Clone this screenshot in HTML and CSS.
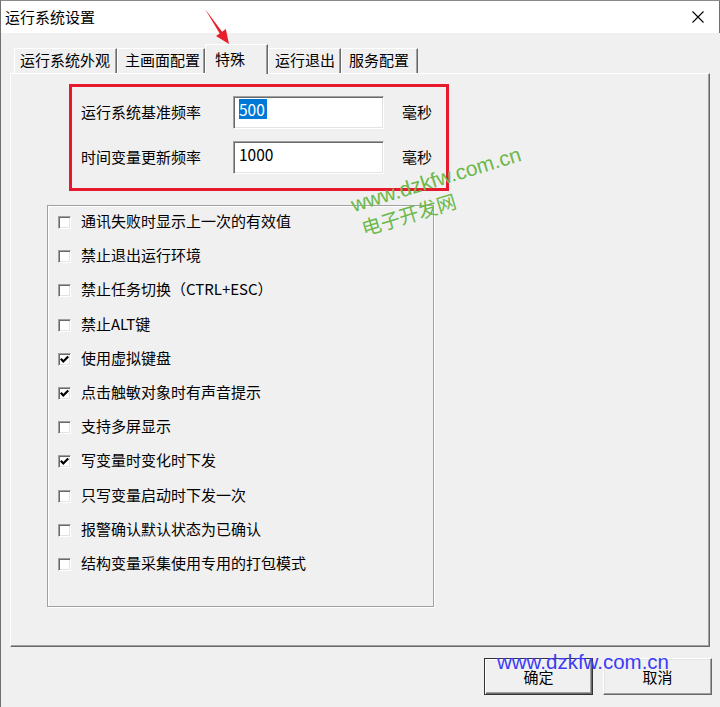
FILE: index.html
```html
<!DOCTYPE html>
<html lang="zh-CN">
<head>
<meta charset="utf-8">
<title>运行系统设置</title>
<link rel="stylesheet" href="styles.css">
</head>
<body>
<div class="window">
  <div class="titlebar">
    <span class="title">运行系统设置</span>
    <svg class="close" width="12" height="12" viewBox="0 0 12 12"><path d="M0.5 0.5 L11.5 11.5 M11.5 0.5 L0.5 11.5" stroke="#000" stroke-width="1.1" fill="none"/></svg>
  </div>
  <div class="client">
    <div class="tabs">
      <div class="tab t1">运行系统外观</div>
      <div class="tab t2">主画面配置</div>
      <div class="tab active">特殊</div>
      <div class="tab t4">运行退出</div>
      <div class="tab t5">服务配置</div>
    </div>
    <div class="panel">
      <div class="freqbox">
        <div class="frow">
          <span class="flabel">运行系统基准频率</span>
          <div class="field"><span class="sel">500</span></div>
          <span class="unit">毫秒</span>
        </div>
        <div class="frow">
          <span class="flabel">时间变量更新频率</span>
          <div class="field"><span>1000</span></div>
          <span class="unit">毫秒</span>
        </div>
      </div>
      <div class="group">
        <div class="opt"><span class="cb"></span><span>通讯失败时显示上一次的有效值</span></div>
        <div class="opt"><span class="cb"></span><span>禁止退出运行环境</span></div>
        <div class="opt"><span class="cb"></span><span>禁止任务切换（CTRL+ESC）</span></div>
        <div class="opt"><span class="cb"></span><span>禁止ALT键</span></div>
        <div class="opt"><span class="cb"><svg width="11" height="11" viewBox="0 0 11 11"><path d="M1.8 4.8 L4.3 7.5 L9.2 2.4" stroke="#000" stroke-width="2.2" fill="none"/></svg></span><span>使用虚拟键盘</span></div>
        <div class="opt"><span class="cb"><svg width="11" height="11" viewBox="0 0 11 11"><path d="M1.8 4.8 L4.3 7.5 L9.2 2.4" stroke="#000" stroke-width="2.2" fill="none"/></svg></span><span>点击触敏对象时有声音提示</span></div>
        <div class="opt"><span class="cb"></span><span>支持多屏显示</span></div>
        <div class="opt"><span class="cb"><svg width="11" height="11" viewBox="0 0 11 11"><path d="M1.8 4.8 L4.3 7.5 L9.2 2.4" stroke="#000" stroke-width="2.2" fill="none"/></svg></span><span>写变量时变化时下发</span></div>
        <div class="opt"><span class="cb"></span><span>只写变量启动时下发一次</span></div>
        <div class="opt"><span class="cb"></span><span>报警确认默认状态为已确认</span></div>
        <div class="opt"><span class="cb"></span><span>结构变量采集使用专用的打包模式</span></div>
      </div>
    </div>
    <div class="buttons">
      <div class="btn default">确定</div>
      <div class="btn">取消</div>
    </div>
  </div>
</div>
<svg class="arrow" width="720" height="60" viewBox="0 0 720 60"><polygon points="205,9 222.1,31.7 225.8,29.1 229,44 216,36.1 219.7,33.5" fill="#e8202a"/></svg>
<div class="wm-green"><div>www.dzkfw.com.cn</div><div class="wm-line2">电子开发网</div></div>
<div class="wm-blue">www.dzkfw.com.cn</div>
</body>
</html>
```
FILE: styles.css
```css
html, body {
  margin: 0;
  padding: 0;
}
body {
  position: relative;
  width: 720px;
  height: 707px;
  overflow: hidden;
  background: #f0f0f0;
  font-family: "Noto Sans CJK SC", sans-serif;
  font-size: 15px;
  color: #000;
}
.window {
  width: 720px;
  height: 707px;
  box-sizing: border-box;
  border-left: 1px solid #707070;
  border-top: 1px solid #8a8a8a;
  background: #f0f0f0;
}
.titlebar {
  height: 32px;
  background: #fff;
  display: flex;
  align-items: center;
  justify-content: space-between;
  padding-left: 4px;
  border-right: 1px solid #707070;
}
.title {
  line-height: 20px;
  margin-top: -1px;
}
.close {
  display: block;
  margin-right: 15px;
}
.client {
  padding: 11px 0 0 9px;
}
.tabs {
  display: flex;
  align-items: flex-end;
  height: 29px;
  margin-left: 4px;
}
.tab {
  position: relative;
  z-index: 1;
  height: 25px;
  box-sizing: border-box;
  border-top: 1px solid #fff;
  border-left: 1px solid #fff;
  border-right: 1px solid #696969;
  box-shadow: inset -1px 0 0 #a0a0a0;
  background: #f0f0f0;
  padding-left: 6px;
  line-height: 22px;
  white-space: nowrap;
}
.t1 { width: 103px; padding-left: 5px; }
.t2 { width: 88px; padding-left: 7px; }
.t4 { width: 73px; padding-left: 6px; }
.t5 { width: 77px; padding-left: 7px; }
.tab.active {
  z-index: 2;
  width: 63px;
  height: 30px;
  margin-bottom: -1px;
  padding-left: 9px;
  line-height: 27px;
}
.panel {
  width: 700px;
  height: 574px;
  box-sizing: border-box;
  border: 1px solid;
  border-color: #fff #696969 #696969 #fff;
  box-shadow: inset -1px -1px 0 #a0a0a0;
  padding-top: 10px;
}
.freqbox {
  width: 380px;
  height: 107px;
  box-sizing: border-box;
  margin-left: 58px;
  border: 3px solid #e8192c;
  padding: 9px 0 0 9px;
  display: flex;
  flex-direction: column;
  gap: 12px;
}
.frow {
  display: flex;
  align-items: center;
  height: 33px;
}
.flabel {
  width: 152px;
  line-height: 20px;
  margin-top: -2px;
}
.field {
  width: 151px;
  height: 33px;
  box-sizing: border-box;
  background: #fff;
  border: 1px solid;
  border-color: #a0a0a0 #fff #fff #a0a0a0;
  box-shadow: inset 1px 1px 0 #696969, inset -1px -1px 0 #e3e3e3;
  padding: 2px 0 0 5px;
  line-height: 20px;
  font-size: 15.5px;
}
.sel {
  display: inline-block;
  background: #0078d7;
  color: #fff;
  padding-right: 2px;
}
.unit {
  margin-left: 18px;
  line-height: 20px;
  margin-top: -2px;
}
.group {
  width: 387px;
  height: 402px;
  box-sizing: border-box;
  margin: 14px 0 0 36px;
  border: 1px solid #a0a0a0;
  box-shadow: inset 1px 1px 0 #fff, 1px 1px 0 #fff;
  padding: 5px 0 0 10px;
}
.opt {
  display: flex;
  align-items: flex-start;
  gap: 10px;
  height: 34.2px;
  line-height: 20px;
}
.cb {
  flex: none;
  width: 13px;
  height: 13px;
  box-sizing: border-box;
  margin-top: 5px;
  background: #fff;
  border: 1px solid;
  border-color: #a0a0a0 #fff #fff #a0a0a0;
  box-shadow: inset 1px 1px 0 #696969, inset -1px -1px 0 #e3e3e3;
}
.cb svg {
  display: block;
}
.buttons {
  display: flex;
  justify-content: flex-end;
  gap: 10px;
  margin-top: 11px;
  padding-right: 8px;
}
.btn {
  width: 109px;
  height: 37px;
  box-sizing: border-box;
  display: flex;
  align-items: center;
  justify-content: center;
  border: 1px solid;
  border-color: #fff #696969 #696969 #fff;
  box-shadow: inset -1px -1px 0 #a0a0a0, inset 1px 1px 0 #e3e3e3;
  line-height: 20px;
}
.btn.default {
  border-color: #333;
  box-shadow: inset 1px 1px 0 #fff, inset -1px -1px 0 #696969, inset -2px -2px 0 #a0a0a0;
}
.arrow {
  position: absolute;
  left: 0;
  top: 0;
}
.wm-green {
  position: absolute;
  left: 348px;
  top: 193px;
  transform-origin: 0 0;
  transform: rotate(-17deg);
  color: #6cb84a;
  font-family: "Liberation Sans", "Noto Sans CJK SC", sans-serif;
  font-size: 21px;
  line-height: 25px;
  white-space: nowrap;
}
.wm-line2 {
  padding-left: 3px;
  font-family: "Noto Sans CJK SC", sans-serif;
  font-size: 19.5px;
}
.wm-blue {
  position: absolute;
  left: 497px;
  top: 652px;
  font-family: "Liberation Sans", sans-serif;
  font-size: 20.5px;
  line-height: 20px;
  color: #3c3cf5;
  white-space: nowrap;
}
```
